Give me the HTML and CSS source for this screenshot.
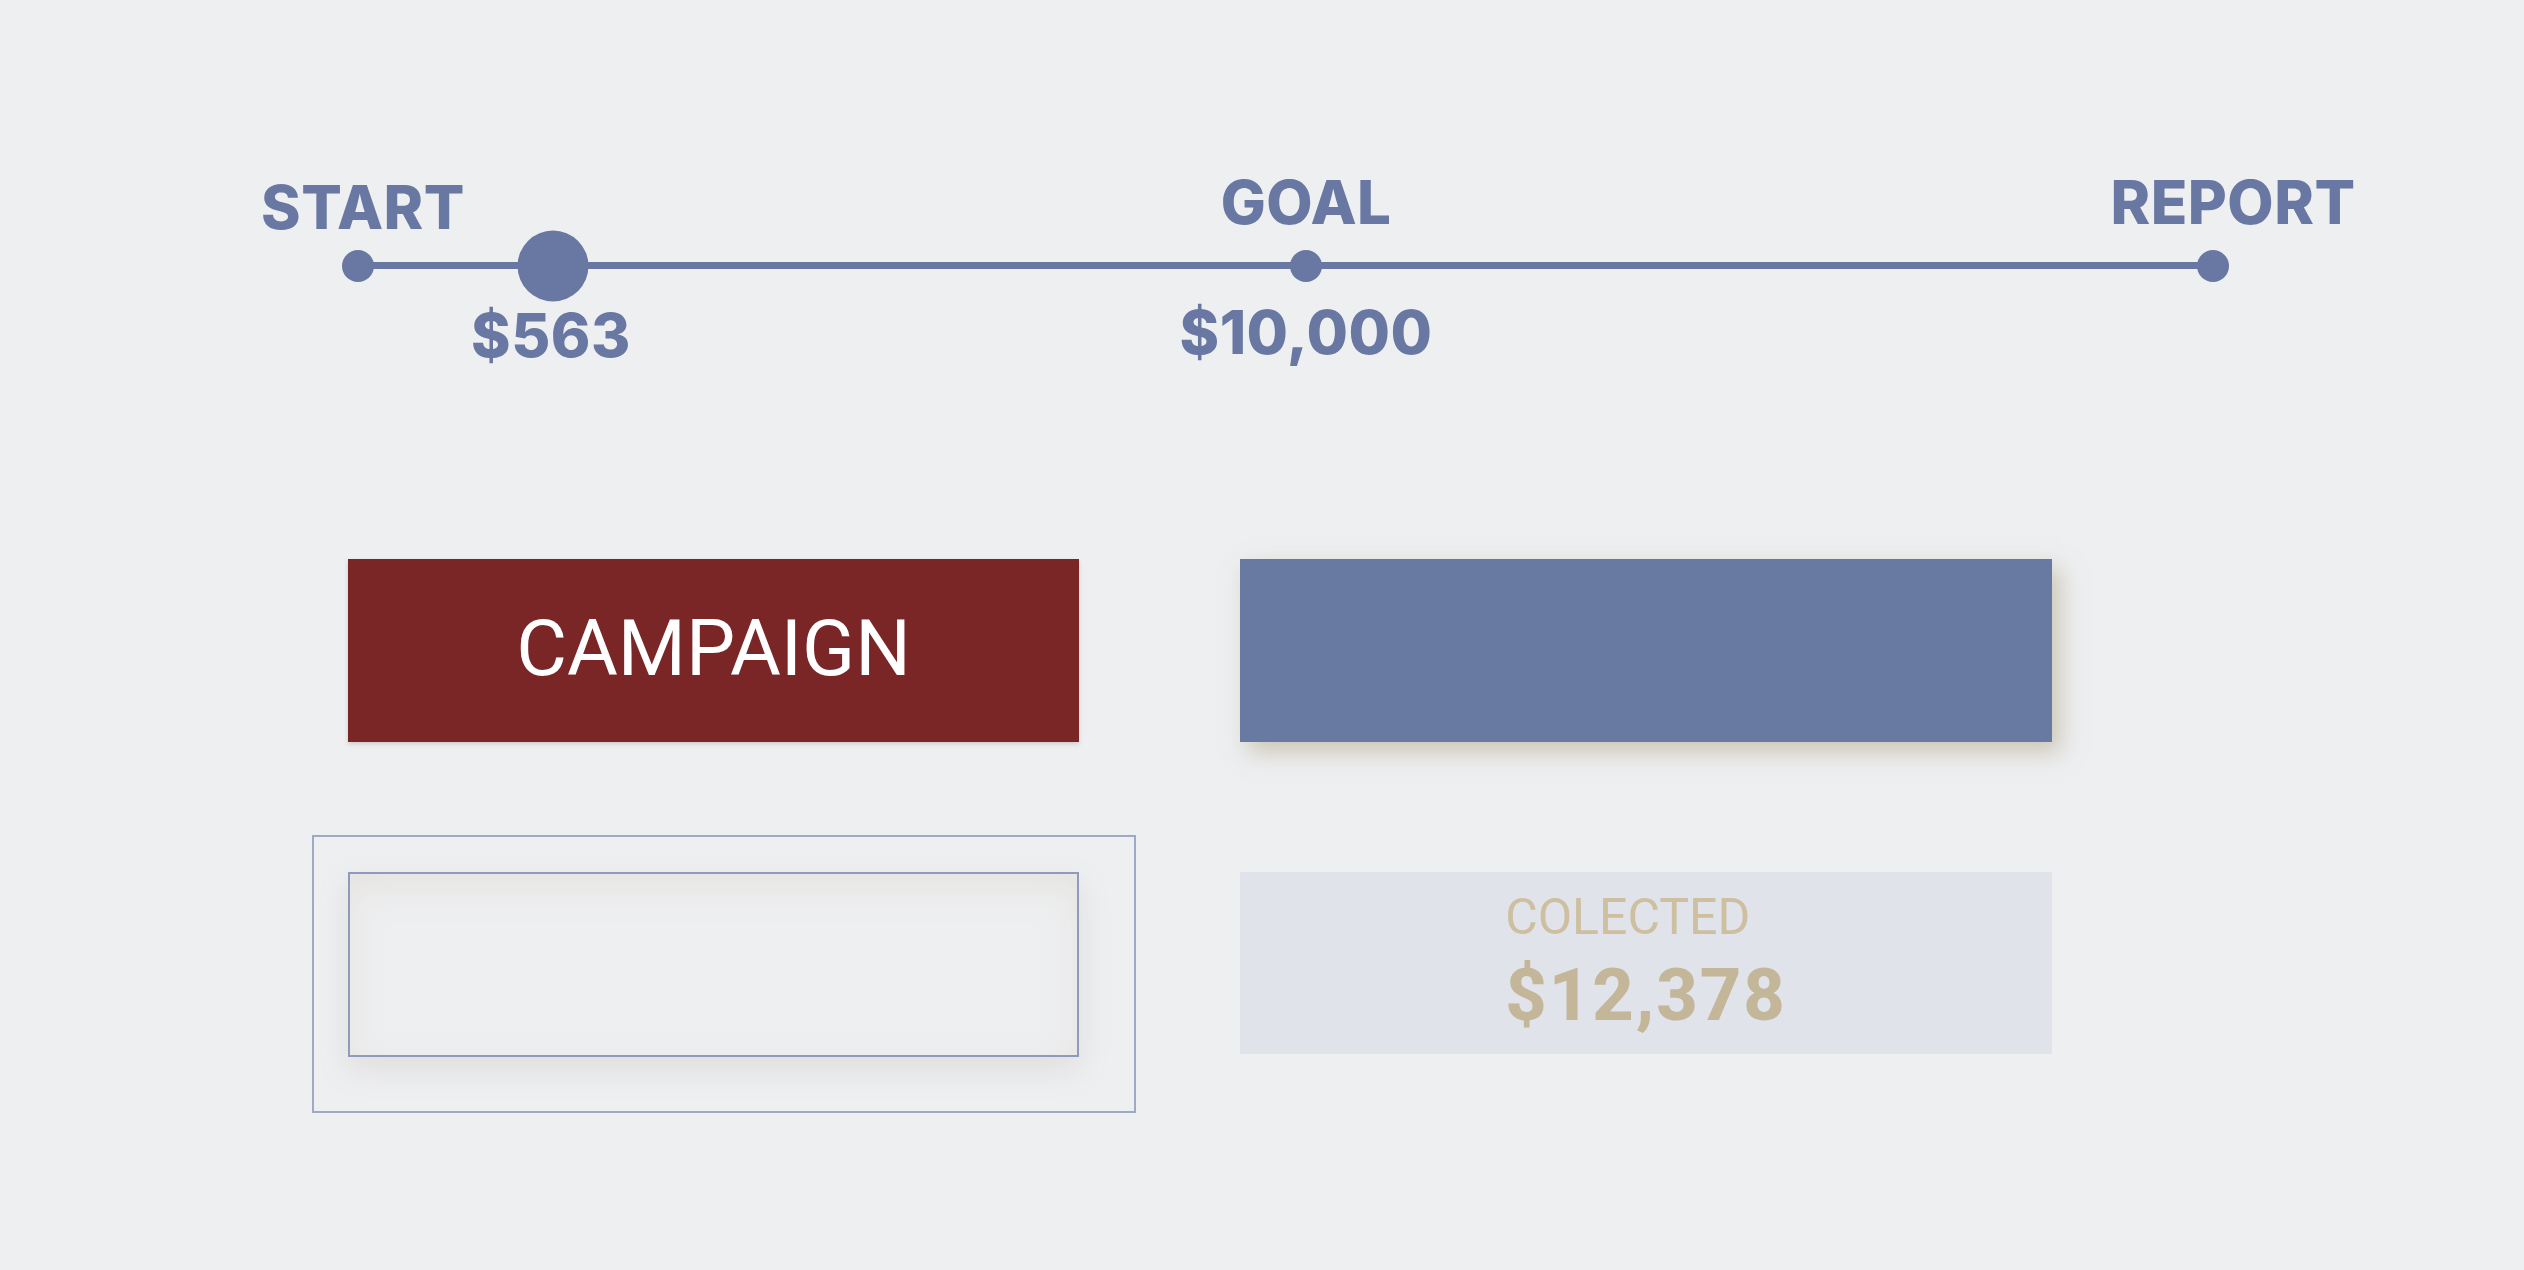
FILE: index.html
```html
<!DOCTYPE html>
<html lang="en">
<head>
<meta charset="utf-8">
<title>Campaign progress</title>
<link rel="stylesheet" href="styles.css">
</head>
<body>
<main class="page">
  <section class="timeline">
    <div class="track"></div>
    <div class="marker" style="left:0%">
      <span class="dot"></span>
      <span class="label label-start">START</span>
    </div>
    <div class="marker" style="left:10.51%">
      <span class="dot dot-current"></span>
      <span class="value value-current">$563</span>
    </div>
    <div class="marker" style="left:51.11%">
      <span class="dot"></span>
      <span class="label">GOAL</span>
      <span class="value">$10,000</span>
    </div>
    <div class="marker" style="left:100%">
      <span class="dot"></span>
      <span class="label label-report">REPORT</span>
    </div>
  </section>

  <section class="cards">
    <div class="card card-campaign">CAMPAIGN</div>
    <div class="card card-blue"></div>
    <div class="framed">
      <div class="card card-input"></div>
    </div>
    <div class="card card-collected">
      <div class="collected-inner">
        <div class="collected-label">COLECTED</div>
        <div class="collected-amount">$12,378</div>
      </div>
    </div>
  </section>
</main>
</body>
</html>
```

FILE: styles.css
```css
html, body {
  margin: 0;
  padding: 0;
  background: #eeeff1;
}

body {
  font-family: "Inter", "Roboto", "Liberation Sans", sans-serif;
  width: 2524px;
  height: 1270px;
  overflow: hidden;
}

.page {
  padding-top: 150px;
}

/* ---------- Timeline ---------- */
.timeline {
  position: relative;
  margin-left: 358px;
  width: 1855px;
  height: 232px;
  color: #6878a2;
}

.track {
  position: absolute;
  left: 0;
  right: 0;
  top: 112px;
  height: 7px;
  background: #6878a2;
}

.marker {
  position: absolute;
  top: 116px;
  width: 0;
  height: 0;
}

.dot {
  position: absolute;
  left: 0;
  top: 0;
  width: 32px;
  height: 32px;
  border-radius: 50%;
  background: #6878a2;
  transform: translate(-50%, -50%);
}

.dot-current {
  width: 71px;
  height: 71px;
}

.label,
.value {
  position: absolute;
  left: 0;
  font-weight: 800;
  font-size: 60px;
  line-height: 1;
  letter-spacing: 0.5px;
  white-space: nowrap;
  transform: translateX(-50%);
}

.label {
  top: -94px;
}

.label-start {
  top: -89px;
  margin-left: 5px;
}

.label-report {
  margin-left: 20px;
}

.value {
  top: 36px;
}

.value-current {
  top: 39px;
  margin-left: -2px;
}

/* ---------- Cards ---------- */
.cards {
  display: grid;
  grid-template-columns: 731px 812px;
  grid-template-rows: 183px 185px;
  column-gap: 161px;
  row-gap: 130px;
  margin-left: 348px;
  margin-top: 177px;
}

.card {
  box-sizing: border-box;
}

.card-campaign {
  background: #7a2626;
  color: #ffffff;
  font-family: "Roboto", "Liberation Sans", sans-serif;
  font-weight: 400;
  font-size: 78px;
  display: flex;
  align-items: center;
  justify-content: center;
  padding-bottom: 4px;
  box-shadow: 0 2px 4px rgba(120, 100, 90, 0.25);
}

.card-blue {
  background: #6879a2;
  box-shadow: 8px 10px 22px rgba(170, 158, 122, 0.5);
}

.framed {
  position: relative;
}

.framed::before {
  content: "";
  position: absolute;
  top: -37px;
  left: -36px;
  right: -57px;
  bottom: -56px;
  border: 2px solid #9ea9c6;
  pointer-events: none;
}

.card-input {
  height: 100%;
  border: 2px solid #8e9bbd;
  background: #eeeff1;
  box-shadow: 0 12px 28px rgba(160, 150, 130, 0.18),
              inset 0 14px 34px rgba(200, 190, 170, 0.22);
}

.card-collected {
  background: #e0e3ea;
  height: 182px;
  display: flex;
  justify-content: center;
  font-family: "Roboto", "Liberation Sans", sans-serif;
}

.collected-inner {
  padding-top: 20px;
  display: flex;
  flex-direction: column;
  align-items: flex-start;
}

.collected-label {
  font-size: 50px;
  font-weight: 400;
  line-height: 1;
  color: #cdbf9f;
}

.collected-amount {
  margin-top: 18px;
  font-size: 72px;
  font-weight: 800;
  line-height: 1;
  letter-spacing: 2px;
  color: #c3b699;
}
```
